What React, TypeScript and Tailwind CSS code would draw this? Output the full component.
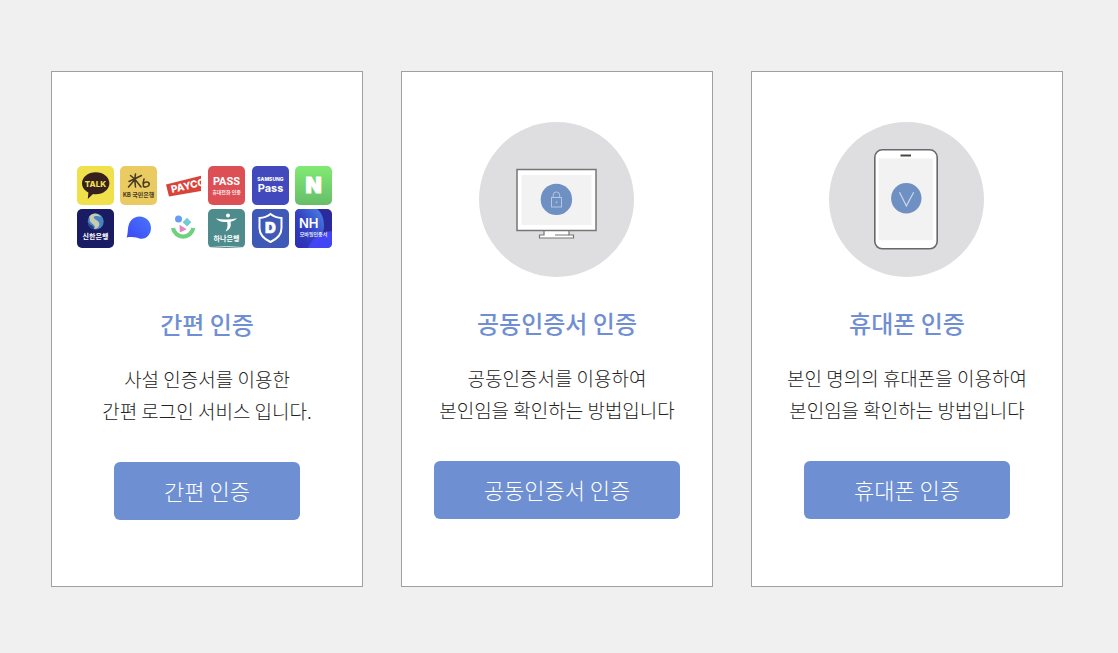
import type { ReactNode } from 'react'

interface AuthMethod {
  id: string
  title: string
  lines: string[]
  picture: ReactNode
}

function Tile({ fill, children }: { fill?: string; children: ReactNode }) {
  return (
    <svg
      viewBox="0 0 37 39"
      className="h-[39px] w-[37px] font-['Noto_Sans_CJK_KR',sans-serif]"
      textAnchor="middle"
      aria-hidden="true"
    >
      {fill && <rect width="37" height="39" rx="5" fill={fill} />}
      {children}
    </svg>
  )
}

function ProviderIcons() {
  return (
    <div className="h-[156px] pt-11 pr-1">
      <div className="mx-auto grid w-[256px] grid-cols-[repeat(6,37px)] justify-between gap-y-1">
        <Tile fill="#f0e04c">
          <path
            d="M18.7 6.3c7.6 0 13.7 4.9 13.7 11s-6.1 11-13.7 11q-1.400 0-2.700-.2L10.800 33l.6-6.400C7.600 24.600 5 21.300 5 17.300c0-6.100 6.100-11 13.700-11z"
            fill="#35201f"
          />
          <text x="18.5" y="21" fontSize="8" fontWeight="800" fill="#f0e04c" className="font-['Inter',sans-serif]">
            TALK
          </text>
        </Tile>

        <Tile fill="#e9cb62">
          <g fill="none" stroke="#463920" strokeWidth="1.5" strokeLinecap="round">
            <path d="M15.500 8c-.8 4-.5 9 0 13M10.500 9.500l3.500 3M21.500 9.500 9 15.500M14.500 14 8.500 21M15.500 14l5.500 7" />
            <path d="M24 13c-1 3-1 6-.5 7.500M23.500 17.500c2-2.500 6-1.500 5.700.8s-3.700 3.200-5.700 2.200" />
          </g>
          <text x="18.5" y="31" fontSize="6" fontWeight="700" fill="#463920">
            KB 국민은행
          </text>
        </Tile>

        <Tile>
          <path d="M2 18.5 38 9.500v15.300L5 30.500z" fill="#d8433a" />
          <text
            x="8"
            y="27"
            textAnchor="start"
            fontSize="10"
            fontWeight="800"
            fill="#fff"
            transform="rotate(-13 8 27)"
            className="font-['Inter',sans-serif]"
          >
            PAYCO
          </text>
        </Tile>

        <Tile fill="#dc4f55">
          <text x="18.5" y="19" fontSize="11" fontWeight="700" fill="#fff" className="font-['Roboto',sans-serif]">
            PASS
          </text>
          <text x="18.5" y="28" fontSize="5" fontWeight="500" fill="#fff">
            휴대전화 인증
          </text>
        </Tile>

        <Tile fill="#4149bd">
          <text x="18.5" y="15" fontSize="5" fontWeight="800" fill="#fff" className="font-['Inter',sans-serif]">
            SAMSUNG
          </text>
          <text x="18.5" y="26" fontSize="11" fontWeight="700" fill="#fff" className="font-['Inter',sans-serif]">
            Pass
          </text>
        </Tile>

        <Tile fill="url(#naver)">
          <defs>
            <linearGradient id="naver" x1="0" y1="0" x2="0" y2="1">
              <stop stopColor="#80ea72" />
              <stop offset="1" stopColor="#67bd6a" />
            </linearGradient>
          </defs>
          <text
            x="18.5"
            y="26.5"
            fontSize="21"
            fontWeight="900"
            fill="#fff"
            stroke="#fff"
            className="font-['Inter',sans-serif]"
          >
            N
          </text>
        </Tile>

        <Tile fill="#191b63">
          <circle cx="18.7" cy="12.5" r="8" fill="#4784c0" />
          <path d="M12 8c4-5 9-4 12 0-5-2-8-1-7 1s7 3 5 8c-1 2-3 3-5 3 3-4-3-5-4-8-.5-2 0-3-1-4z" fill="#c9cbb0" />
          <path d="M11 13c2 4 6 3 6 7-3 0-6-3-6-7z" fill="#243e83" />
          <text x="18.5" y="30" fontSize="7" fontWeight="700" fill="#fff">
            신한은행
          </text>
        </Tile>

        <Tile>
          <defs>
            <linearGradient id="toss" x1="0" y1="1" x2="1" y2="0">
              <stop stopColor="#3c48f5" />
              <stop offset="1" stopColor="#4a76fa" />
            </linearGradient>
          </defs>
          <path
            d="M6.5 28.500c.9-2 1.100-4 1.400-8C8.500 12.500 13 7.500 19.500 7.500S31 12.500 31 19c0 7-5.500 12-11.500 10.500-2.500-.8-6-2-13-1z"
            fill="url(#toss)"
          />
        </Tile>

        <Tile>
          <circle cx="14.5" cy="10" r="3.5" fill="#669df5" />
          <path d="m23 8.800 4.400 4.400-4.400 4.400-4.400-4.400z" fill="#74cbd2" />
          <path d="m15.500 15.800 7.200 4.500-6.800 3.200z" fill="#e983bf" />
          <path d="M9 19a10.300 10.300 0 0 0 20.300 0" fill="none" stroke="#6dd180" strokeWidth="4.2" />
        </Tile>

        <Tile fill="#4e8b8d">
          <circle cx="20" cy="6.5" r="2" fill="#fff" />
          <path
            d="M8 9.500c7 1.500 14 1.200 21-.2-2 2.200-4.500 3-6.500 3.400 1 4.500-.5 8-5 9.800 2.300-3.500 2.400-6.500 1.600-9.500C14.500 13 10.500 12.500 8 9.500z"
            fill="#fff"
          />
          <text x="18.5" y="32" fontSize="7" fontWeight="700" fill="#fff">
            하나은행
          </text>
          <path d="M3 38.5q15.500-2 31 0" stroke="#d5e4e4" fill="none" />
        </Tile>

        <Tile fill="#3f5ab6">
          <path
            d="M18.5 5c3.500 2.800 7 3.800 11 4v10c0 6.500-4.500 11-11 14-6.500-3-11-7.500-11-14V9c4-.2 7.500-1.200 11-4z"
            fill="none"
            stroke="#fff"
            strokeWidth="2"
          />
          <text
            x="18.5"
            y="24"
            fontSize="15"
            fontWeight="900"
            fill="#fff"
            stroke="#fff"
            strokeWidth="0.5"
            className="font-['Inter',sans-serif]"
          >
            D
          </text>
        </Tile>

        <Tile fill="#2a2a9c">
          <defs>
            <linearGradient id="nh" x1="1" y1="0" x2="0" y2="1">
              <stop stopColor="#4a86e4" />
              <stop offset="0.5" stopColor="#3443c4" />
              <stop offset="1" stopColor="#2b2db0" />
            </linearGradient>
          </defs>
          <path d="M5 0h17c5 4 7 10 7 17 0 9-5 17-13 22H5q-5 0-5-5V5q0-5 5-5z" fill="url(#nh)" />
          <path d="M13 39C17 29 26 23 37 22v12q0 5-5 5z" fill="#4344f3" />
          <text
            x="4"
            y="18.5"
            textAnchor="start"
            fontSize="13"
            fontWeight="600"
            fill="#fff"
            className="font-['Inter',sans-serif]"
          >
            NH
          </text>
          <text x="18.5" y="27" fontSize="5" fontWeight="500" fill="#fff">
            모바일인증서
          </text>
        </Tile>
      </div>
    </div>
  )
}

function MonitorPicture() {
  return (
    <svg viewBox="0 0 155 155" className="size-[155px]" fill="none" aria-hidden="true">
      <circle cx="77.5" cy="77.5" r="77.5" fill="#dedee0" />
      <path d="M65 108.500h25v4.500h4.500v3h-34v-3H65z" fill="#fff" stroke="#777575" strokeWidth="1.2" />
      <path d="M76 113h14" stroke="#777575" />
      <rect x="38" y="47.5" width="79" height="61" fill="#fff" stroke="#777575" strokeWidth="1.5" />
      <rect x="42.5" y="53" width="70" height="50" fill="#f2f2f2" />
      <circle cx="77.4" cy="77.4" r="15.7" fill="#6f90c3" />
      <g stroke="#b4c6e2">
        <rect x="72.5" y="75.5" width="10" height="9.5" />
        <path d="M74.200 75.500v-2.300a3.200 3.200 0 0 1 6.500 0v2.300" />
        <circle cx="77.5" cy="80.2" r="0.6" />
      </g>
    </svg>
  )
}

function PhonePicture() {
  return (
    <svg viewBox="0 0 155 155" className="size-[155px]" fill="none" aria-hidden="true">
      <circle cx="77.5" cy="77.5" r="77.5" fill="#dedee0" />
      <rect x="45.8" y="27.8" width="62.4" height="99" rx="7.5" fill="#fff" stroke="#686868" strokeWidth="1.6" />
      <rect x="49.7" y="36.3" width="54.5" height="82" fill="#f2f2f2" />
      <path d="M71.500 33.500h10.500" stroke="#4a4646" strokeWidth="2" />
      <circle cx="77.3" cy="76.3" r="15.2" fill="#6f90c3" />
      <path d="m70.500 70.300 6.900 13.600 7.300-13.600" stroke="#cbd7ea" strokeWidth="1.2" />
    </svg>
  )
}

const methods: AuthMethod[] = [
  {
    id: 'simple',
    title: '간편 인증',
    lines: ['사설 인증서를 이용한', '간편 로그인 서비스 입니다.'],
    picture: <ProviderIcons />,
  },
  {
    id: 'certificate',
    title: '공동인증서 인증',
    lines: ['공동인증서를 이용하여', '본인임을 확인하는 방법입니다'],
    picture: <MonitorPicture />,
  },
  {
    id: 'phone',
    title: '휴대폰 인증',
    lines: ['본인 명의의 휴대폰을 이용하여', '본인임을 확인하는 방법입니다'],
    picture: <PhonePicture />,
  },
]

function AuthCard({ method }: { method: AuthMethod }) {
  return (
    <section className="border border-[#a0a0a0] bg-white pt-[50px] pb-[66px] text-center">
      <div className="flex justify-center pr-px">{method.picture}</div>
      <h2 className="mt-7 text-2xl leading-9 font-medium text-[#708fd3]">{method.title}</h2>
      <p className="mt-[21px] text-[19px] leading-8 font-light text-[#222]">
        {method.lines.map((line) => (
          <span key={line} className="block">
            {line}
          </span>
        ))}
      </p>
      <button
        type="button"
        className="mt-[35px] h-[58px] rounded-md bg-[#6e8fd2] px-[50px] pb-0.5 text-[22px] font-light text-white"
      >
        {method.title}
      </button>
    </section>
  )
}

export default function App() {
  return (
    <main className="min-h-screen bg-[#f0f0f0] pt-[71px] pr-[55px] pb-16 pl-[51px] font-['Noto_Sans_CJK_KR','Noto_Sans',sans-serif]">
      <div className="grid grid-cols-3 gap-[38px]">
        {methods.map((method) => (
          <AuthCard key={method.id} method={method} />
        ))}
      </div>
    </main>
  )
}
